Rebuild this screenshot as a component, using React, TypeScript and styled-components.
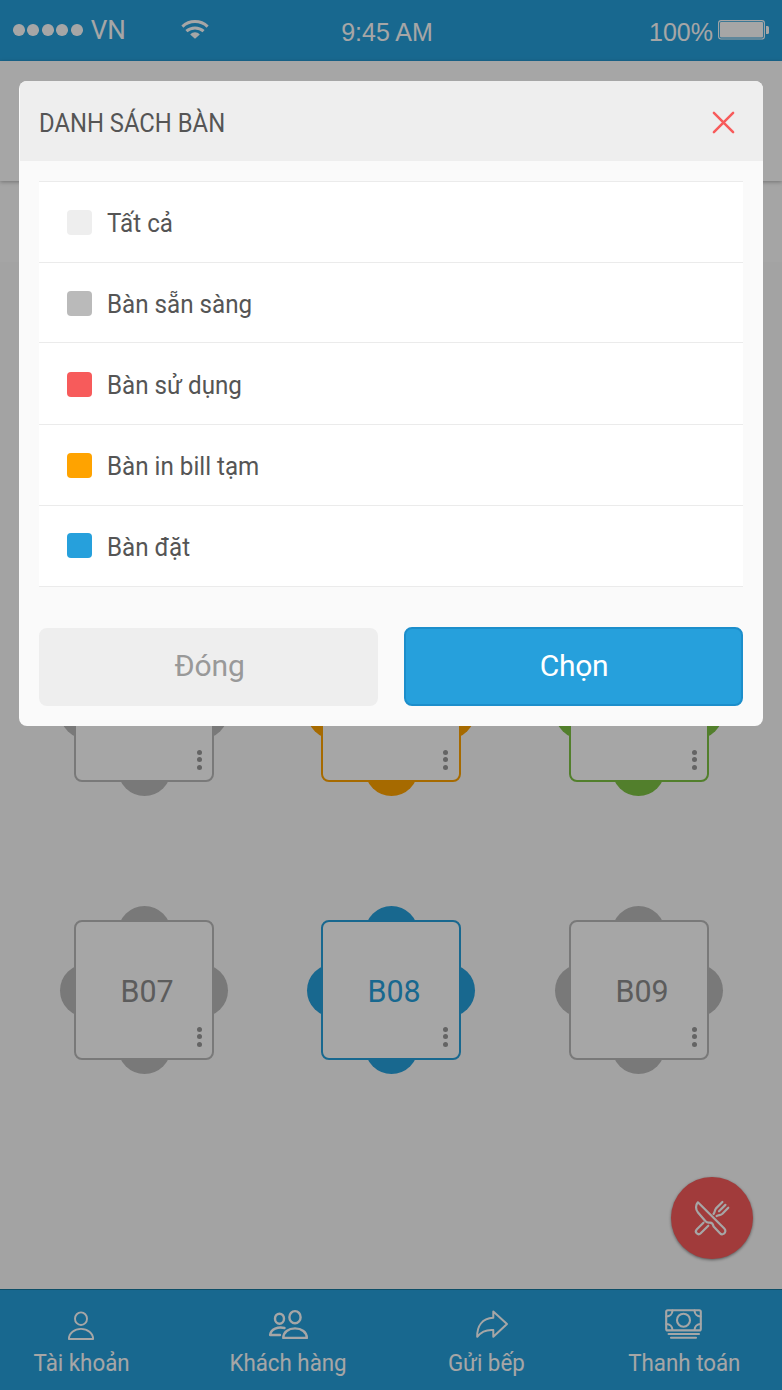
import React from 'react';
import styled, { createGlobalStyle } from 'styled-components';

const GlobalStyle = createGlobalStyle`
  * { box-sizing: border-box; }
  body { margin: 0; font-family: Roboto, "Liberation Sans", sans-serif; }
  button { font: inherit; border: 0; padding: 0; background: none; }
`;

const Screen = styled.div`
  position: relative;
  display: flex;
  flex-direction: column;
  width: 782px;
  height: 1390px;
  overflow: hidden;
  background: #fafafa;
`;

const StatusBar = styled.div`
  display: flex;
  flex: none;
  align-items: flex-start;
  height: 61px;
  padding: 0 13px;
  background: #26a0dc;
  color: #fff;
  font-family: "Liberation Sans", Arial, sans-serif;
  font-size: 25px;
  line-height: 30px;
`;

const StatusSide = styled.div<{ $end?: boolean }>`
  display: flex;
  flex: 1;
  align-items: flex-start;
  justify-content: ${(p) => (p.$end ? 'flex-end' : 'flex-start')};
`;

const SignalDots = styled.div`
  display: flex;
  gap: 2.8px;
  margin-top: 24px;
`;

const SignalDot = styled.i`
  width: 11.7px;
  height: 11.7px;
  border-radius: 50%;
  background: #fff;
`;

const Carrier = styled.span`
  margin: 15px 0 0 8px;
  font-family: Roboto, sans-serif;
  font-size: 26px;
`;

const WifiIcon = styled.svg`
  margin: 19px 0 0 55px;
`;

const StatusText = styled.span<{ $pull?: number }>`
  margin-top: 17px;
  margin-left: ${(p) => -(p.$pull ?? 0)}px;
  margin-right: ${(p) => p.$pull ?? 0}px;
`;

const BatteryIcon = styled.svg`
  margin: 19px -1px 0 5px;
`;

const AppHeader = styled.div`
  position: relative;
  flex: none;
  height: 120px;
  background: #fff;
  box-shadow: 0 1px 4px rgba(0, 0, 0, 0.3);
`;

const FilterBar = styled.div`
  flex: none;
  height: 81px;
  background: #fdfdfd;
`;

const FloorPlan = styled.div`
  display: grid;
  flex: 1;
  grid-template-columns: 247px 248px 140px;
  grid-auto-rows: 140px;
  row-gap: 138px;
  padding: 380px 0 0 74px;
`;

const Table = styled.div<{ $color: string }>`
  position: relative;
  width: 140px;
  height: 140px;
  color: ${(p) => p.$color};
`;

const Seat = styled.i<{ $x: number; $y: number }>`
  position: absolute;
  left: ${(p) => p.$x}px;
  top: ${(p) => p.$y}px;
  width: 53px;
  height: 53px;
  border-radius: 50%;
  background: currentColor;
`;

const TableTop = styled.div<{ $label: string }>`
  position: absolute;
  inset: 0;
  display: flex;
  align-items: center;
  justify-content: center;
  padding: 3px 0 0 6px;
  border: 2px solid currentColor;
  border-radius: 8px;
  background: #fff;
  font-size: 31px;

  span {
    color: ${(p) => p.$label};
    transform: scaleX(0.98);
  }
`;

const MoreDots = styled.div<{ $right: number; $bottom: number }>`
  position: absolute;
  right: ${(p) => p.$right}px;
  bottom: ${(p) => p.$bottom}px;
  display: flex;
  flex-direction: column;
  gap: 2.7px;

  i {
    width: 5px;
    height: 5px;
    border-radius: 50%;
    background: #9a9a9a;
  }
`;

const NavBar = styled.nav`
  display: flex;
  flex: none;
  justify-content: space-between;
  height: 101px;
  padding: 16px 41px 0 35px;
  border-top: 1px solid #15789f;
  background: #26a0dc;
  color: #fff;
`;

const NavItem = styled.div<{ $width: number }>`
  display: flex;
  flex-direction: column;
  align-items: center;
  width: ${(p) => p.$width}px;
`;

const NavLabel = styled.span`
  font-size: 24px;
  line-height: 30px;
  white-space: nowrap;
  transform: scaleX(0.93);
`;

const NavIcon = styled.svg<{ $shift?: number }>`
  flex: none;
  height: 36px;
  margin-left: ${(p) => p.$shift ?? 0}px;
  margin-bottom: 6px;
  fill: none;
  stroke: currentColor;
  stroke-linejoin: round;
  stroke-linecap: round;
`;

const Fab = styled.button`
  position: absolute;
  left: 671px;
  top: 1177px;
  display: flex;
  align-items: center;
  justify-content: center;
  width: 82px;
  height: 82px;
  border-radius: 50%;
  background: #f75b5b;
  box-shadow: 0 1px 3px rgba(0, 0, 0, 0.45);
`;

const Backdrop = styled.div`
  position: absolute;
  inset: 0;
  background: rgba(0, 0, 0, 0.35);
`;

const Dialog = styled.section`
  position: absolute;
  left: 19px;
  top: 81px;
  width: 744px;
  height: 645px;
  overflow: hidden;
  border-radius: 8px;
  background: #fafafa;
  color: #555;
`;

const DialogHeader = styled.header`
  display: flex;
  align-items: center;
  justify-content: space-between;
  height: 80px;
  margin-left: 1px;
  padding: 3px 28px 0 19px;
  background: #eee;
`;

const DialogTitle = styled.h1`
  margin: 0;
  font-size: 26px;
  font-weight: 400;
  transform: scaleX(0.916);
  transform-origin: left;
`;

const CloseButton = styled.button`
  display: flex;
`;

const StatusList = styled.ul`
  margin: 20px 20px 0;
  padding: 0;
  border-top: 1px solid #ebebeb;
  background: #fff;
  list-style: none;
`;

const StatusRow = styled.li<{ $height: number; $top: number }>`
  display: flex;
  align-items: flex-start;
  gap: 15px;
  height: ${(p) => p.$height}px;
  padding: ${(p) => p.$top}px 28px 0;
  border-bottom: 1px solid #ebebeb;
`;

const StatusName = styled.span`
  margin-top: -2px;
  font-size: 26px;
  line-height: 30px;
  transform: scaleX(0.93);
  transform-origin: left;
`;

const Swatch = styled.i<{ $color: string; $raise?: boolean }>`
  width: 25px;
  height: 25px;
  margin-top: ${(p) => (p.$raise ? -1 : 0)}px;
  border-radius: 4px;
  background: ${(p) => p.$color};
`;

const Actions = styled.div`
  display: flex;
  align-items: flex-end;
  justify-content: space-between;
  height: 79px;
  margin: 40px 20px 0;
`;

const ActionButton = styled.button<{ $primary?: boolean }>`
  width: 339px;
  height: ${(p) => (p.$primary ? 79 : 78)}px;
  padding: ${(p) => (p.$primary ? '0 0 2px 1px' : '0 0 4px 2px')};
  border: 2px solid ${(p) => (p.$primary ? '#1c8ecb' : '#eee')};
  border-radius: 8px;
  background: ${(p) => (p.$primary ? '#26a0dc' : '#eee')};
  color: ${(p) => (p.$primary ? '#fff' : '#999')};
  font-size: 30px;
  letter-spacing: ${(p) => (p.$primary ? -0.3 : -0.1)}px;
`;

const tables = [
  { color: '#bababa', label: '#8e8e8e', name: '', right: 12, bottom: 12, seatX: 44 },
  { color: '#ffa300', label: '#ffa300', name: '', right: 13, bottom: 12, seatX: 44 },
  { color: '#7ec344', label: '#7ec344', name: '', right: 12, bottom: 12, seatX: 43 },
  { color: '#bababa', label: '#8e8e8e', name: 'B07', right: 12, bottom: 13, seatX: 44 },
  { color: '#26a0dc', label: '#26a0dc', name: 'B08', right: 13, bottom: 13, seatX: 44 },
  { color: '#bababa', label: '#8e8e8e', name: 'B09', right: 12, bottom: 13, seatX: 43 },
];

const statuses = [
  { label: 'Tất cả', color: '#eee', height: 81, top: 28 },
  { label: 'Bàn sẵn sàng', color: '#bababa', height: 80, top: 28 },
  { label: 'Bàn sử dụng', color: '#f75b5b', height: 82, top: 29 },
  { label: 'Bàn in bill tạm', color: '#ffa300', height: 81, top: 28 },
  { label: 'Bàn đặt', color: '#26a0dc', height: 81, top: 28, raise: true },
];

export default function App() {
  return (
    <>
      <GlobalStyle />
      <Screen>
        <StatusBar>
          <StatusSide>
            <SignalDots>
              {[0, 1, 2, 3, 4].map((n) => <SignalDot key={n} />)}
            </SignalDots>
            <Carrier>VN</Carrier>
            <WifiIcon width="28" height="21" viewBox="0 0 28 21" fill="none" stroke="#fff" strokeWidth="3">
              <path d="M1.4 7.6C8.4 .9 19.6 .9 26.6 7.6" />
              <path d="M5.4 12.2C10.4 7.8 17.6 7.8 22.6 12.2" />
              <path d="M9.2 15.4C12 12.6 16 12.6 18.8 15.4L14 19.8Z" fill="#fff" stroke="none" />
            </WifiIcon>
          </StatusSide>
          <StatusText $pull={4}>9:45 AM</StatusText>
          <StatusSide $end>
            <StatusText>100%</StatusText>
            <BatteryIcon width="52" height="22" viewBox="0 0 52 22">
              <rect x="0.6" y="1.6" width="45.8" height="18.4" rx="2.5" fill="none" stroke="#fff" strokeWidth="1.1" />
              <rect x="2" y="3" width="43" height="15.4" rx="1" fill="#fff" />
              <path d="M48 7h1.5q1.5 0 1.5 1.5v5q0 1.5-1.5 1.5H48z" fill="#fff" />
            </BatteryIcon>
          </StatusSide>
        </StatusBar>
        <AppHeader />
        <FilterBar />
        <FloorPlan>
          {tables.map((t, i) => (
            <Table key={i} $color={t.color}>
              <Seat $x={t.seatX} $y={-14} />
              <Seat $x={t.seatX} $y={101} />
              <Seat $x={-14} $y={44} />
              <Seat $x={101} $y={44} />
              <TableTop $label={t.label}>
                {t.name && <span>{t.name}</span>}
                <MoreDots $right={t.right - 2} $bottom={t.bottom - 2}><i /><i /><i /></MoreDots>
              </TableTop>
            </Table>
          ))}
        </FloorPlan>
        <NavBar>
          <NavItem $width={94}>
            <NavIcon width="30" viewBox="0 0 30 36" strokeWidth="1.9" $shift={-2}>
              <ellipse cx="15" cy="12.7" rx="6" ry="6.3" />
              <path d="M2.9 33C2.9 27 8.5 22.9 15 22.9S27.1 27 27.1 33Z" />
            </NavIcon>
            <NavLabel>Tài khoản</NavLabel>
          </NavItem>
          <NavItem $width={118}>
            <NavIcon width="44" viewBox="0 0 44 36" strokeWidth="2.4" $shift={3}>
              <ellipse cx="28" cy="11.2" rx="5.6" ry="6.1" />
              <path d="M16.3 31.9C16.3 26 21.5 22.4 28 22.4S39.8 26 39.8 31.9Z" />
              <ellipse cx="12.5" cy="12.7" rx="4.5" ry="5" />
              <path d="M17.5 22C11 20.5 3.8 23 3.1 29H13" />
            </NavIcon>
            <NavLabel>Khách hàng</NavLabel>
          </NavItem>
          <NavItem $width={81}>
            <NavIcon width="36" viewBox="0 0 36 36" strokeWidth="2" $shift={10}>
              <path d="M19.3 5.5L33 18L19.3 30.8V24C13 23.5 7 26 3.2 30.8C3 20 8 12.5 19.3 11.8Z" />
            </NavIcon>
            <NavLabel>Gửi bếp</NavLabel>
          </NavItem>
          <NavItem $width={114}>
            <NavIcon width="40" viewBox="0 0 40 36" strokeWidth="2.1">
              <rect x="2.2" y="4.2" width="34.6" height="20.2" rx="1.5" />
              <circle cx="19.5" cy="14.2" r="6.5" />
              <path d="M8.5 4.5A6.3 6.3 0 0 1 2.5 10.5M30.5 4.5A6.3 6.3 0 0 0 36.5 10.5M8.5 24A6.3 6.3 0 0 0 2.5 18M30.5 24A6.3 6.3 0 0 1 36.5 18" />
              <path d="M4.6 28H35M7 31.7H32" />
            </NavIcon>
            <NavLabel>Thanh toán</NavLabel>
          </NavItem>
        </NavBar>
        <Fab aria-label="Menu">
          <svg width="38" height="38" viewBox="0 0 38 38" fill="none" stroke="#fff" strokeWidth="2.2" strokeLinecap="round" strokeLinejoin="round">
            <path d="M4.9 3.3L31.3 29.5C33 31.2 32.5 33.5 31.1 34.5C29.8 35.5 28 35.3 27 34.2L20.6 27.5C20.1 25 18.8 23.3 16.5 23.6C14.5 24 13.5 23.3 12.3 22L5 13.5C2.3 10.5 2.5 6 4.9 3.3Z" />
            <path d="M10.5 23.7L3.9 30.3C2.7 31.5 2.7 33.3 3.7 34.3C4.8 35.4 6.6 35.3 7.7 34.2L15.3 26.7" />
            <path d="M29.4 3L23 9.4C21.5 11 22.2 12.8 20.5 15M35.3 8.7L29.4 14.7C27.5 16.5 26 15.6 23.6 17M32.4 5.9L26 12.3" />
          </svg>
        </Fab>
        <Backdrop />
        <Dialog>
          <DialogHeader>
            <DialogTitle>DANH SÁCH BÀN</DialogTitle>
            <CloseButton aria-label="Đóng">
              <svg width="23" height="23" viewBox="0 0 23 23" stroke="#f75b5b" strokeWidth="2.5" strokeLinecap="round">
                <path d="M1.9 1.9L21.1 21.1M21.1 1.9L1.9 21.1" />
              </svg>
            </CloseButton>
          </DialogHeader>
          <StatusList>
            {statuses.map((s) => (
              <StatusRow key={s.label} $height={s.height} $top={s.top}>
                <Swatch $color={s.color} $raise={s.raise} />
                <StatusName>{s.label}</StatusName>
              </StatusRow>
            ))}
          </StatusList>
          <Actions>
            <ActionButton>Đóng</ActionButton>
            <ActionButton $primary>Chọn</ActionButton>
          </Actions>
        </Dialog>
      </Screen>
    </>
  );
}
